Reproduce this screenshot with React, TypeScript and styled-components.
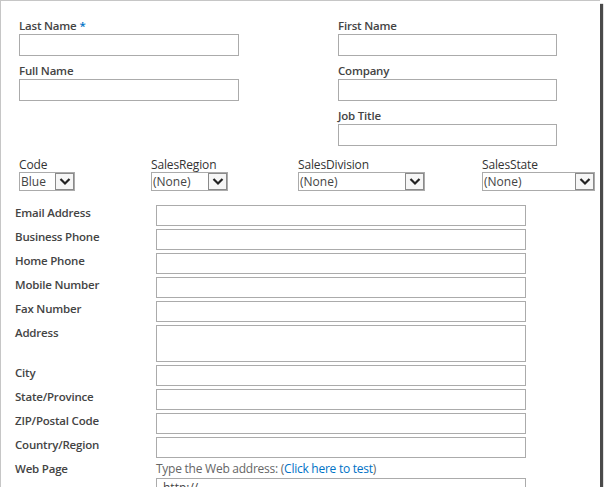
import styled, { createGlobalStyle } from "styled-components";

// styles

const GlobalStyle = createGlobalStyle`
  html, body {
    margin: 0;
    padding: 0;
    background: #ffffff;
  }
  body {
    font-family: "Open Sans", "Noto Sans", sans-serif;
    color: #444444;
  }
`;

const Frame = styled.div`
  width: 599px;
  height: 486px;
  border-top: 1px solid #c6c6c6;
  border-left: 1px solid #c6c6c6;
  background: #ffffff;
  overflow: hidden;
  box-shadow: 3px 4px 1px #4a4a4a;
`;

const TopGrid = styled.div`
  display: grid;
  grid-template-columns: 319px 220px;
  padding: 16px 0 0 18px;
`;

const Column = styled.div`
  display: flex;
  flex-direction: column;
`;

const Field = styled.div`
  display: flex;
  flex-direction: column;
  height: 45px;
`;

const Label = styled.div`
  font-size: 11.5px;
  font-weight: 600;
  letter-spacing: -0.2px;
  line-height: 17px;
  height: 17px;
  color: #444444;
`;

const Star = styled.span`
  color: #0072c6;
  margin-left: 3px;
`;

const TextBox = styled.div<{ $w?: number; $h?: number }>`
  box-sizing: border-box;
  width: ${(p) => p.$w ?? 220}px;
  height: ${(p) => p.$h ?? 22}px;
  border: 1px solid #ababab;
  background: #ffffff;
  font-size: 12px;
  line-height: 18px;
  padding: 0 6px;
  color: #444444;
`;

const SelectRow = styled.div`
  display: flex;
  padding: 5px 0 0 18px;
`;

const SelectCell = styled.div<{ $w: number }>`
  width: ${(p) => p.$w}px;
  display: flex;
  flex-direction: column;
`;

const SelectLabel = styled.div`
  font-size: 12px;
  font-weight: 400;
  letter-spacing: -0.15px;
  line-height: 15px;
  color: #333333;
`;

const SelectBox = styled.div<{ $w: number }>`
  box-sizing: border-box;
  width: ${(p) => p.$w}px;
  height: 19px;
  border: 1px solid #ababab;
  display: flex;
  align-items: center;
  justify-content: space-between;
  font-size: 12px;
  color: #444444;
  padding-left: 1px;
`;

const DropButton = styled.span`
  box-sizing: border-box;
  width: 19px;
  height: 17px;
  border: 1px solid #8a8a8a;
  background: #f6f6f6;
  display: flex;
  align-items: center;
  justify-content: center;
`;

const Table = styled.div`
  display: flex;
  flex-direction: column;
  gap: 3px;
  padding: 14px 0 0 14px;
`;

const Row = styled.div`
  display: grid;
  grid-template-columns: 141px 370px;
  align-items: start;
`;

const RowLabel = styled.div`
  font-size: 11.5px;
  font-weight: 600;
  letter-spacing: -0.2px;
  line-height: 16px;
  color: #444444;
`;

const Hint = styled.div`
  font-size: 12px;
  letter-spacing: -0.25px;
  line-height: 15px;
  color: #666666;
  margin: 0 0 2px;
`;

const Link = styled.span`
  color: #0072c6;
`;

const Chevron = () => (
  <svg width="12" height="9" viewBox="0 0 12 9">
    <path d="M1.5 2 L6 6.5 L10.5 2" fill="none" stroke="#222" strokeWidth="2.2" />
  </svg>
);

const Select = ({ label, value, w, cell }: { label: string; value: string; w: number; cell: number }) => (
  <SelectCell $w={cell}>
    <SelectLabel>{label}</SelectLabel>
    <SelectBox $w={w}>
      <span>{value}</span>
      <DropButton>
        <Chevron />
      </DropButton>
    </SelectBox>
  </SelectCell>
);

const rows = [
  "Email Address",
  "Business Phone",
  "Home Phone",
  "Mobile Number",
  "Fax Number",
  "Address",
  "City",
  "State/Province",
  "ZIP/Postal Code",
  "Country/Region",
];

const App = () => {
  return (
    <>
      <GlobalStyle />
      <Frame>
        <TopGrid>
          <Column>
            <Field>
              <Label>
                Last Name<Star>*</Star>
              </Label>
              <TextBox />
            </Field>
            <Field>
              <Label>Full Name</Label>
              <TextBox />
            </Field>
          </Column>
          <Column>
            <Field>
              <Label>First Name</Label>
              <TextBox $w={219} />
            </Field>
            <Field>
              <Label>Company</Label>
              <TextBox $w={219} />
            </Field>
            <Field>
              <Label>Job Title</Label>
              <TextBox $w={219} />
            </Field>
          </Column>
        </TopGrid>
        <SelectRow>
          <Select label="Code" value="Blue" w={56} cell={132} />
          <Select label="SalesRegion" value="(None)" w={77} cell={147} />
          <Select label="SalesDivision" value="(None)" w={127} cell={184} />
          <Select label="SalesState" value="(None)" w={113} cell={113} />
        </SelectRow>
        <Table>
          {rows.map((r) => (
            <Row key={r}>
              <RowLabel>{r}</RowLabel>
              <TextBox $w={370} $h={r === "Address" ? 37 : 21} />
            </Row>
          ))}
          <Row>
            <RowLabel>Web Page</RowLabel>
            <div>
              <Hint>
                Type the Web address: (<Link>Click here to test</Link>)
              </Hint>
              <TextBox $w={370} $h={21}>
                http://
              </TextBox>
            </div>
          </Row>
        </Table>
      </Frame>
    </>
  );
};

export default App;
